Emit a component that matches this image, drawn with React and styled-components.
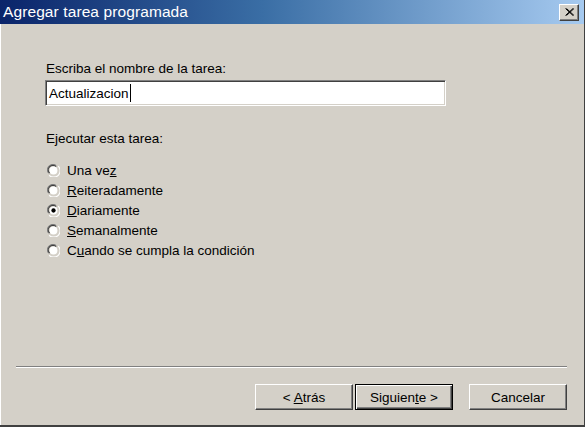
import React from "react"
import styled, { createGlobalStyle } from "styled-components"

const Global = createGlobalStyle`
  html, body {
    margin: 0;
    padding: 0;
    background: #d4d0c8;
  }
  body {
    font-family: "Liberation Sans", Arial, sans-serif;
    font-size: 13.5px;
    color: #000;
  }
`

const Window = styled.div`
  width: 585px;
  height: 427px;
  box-sizing: border-box;
  display: flex;
  flex-direction: column;
  background: #d4d0c8;
  border-right: 1px solid #404040;
  border-bottom: 2px solid #404040;
  box-shadow: inset 1px 0 0 #fff, inset 3px 0 0 #d4d0c8;
  overflow: hidden;
`

const TitleBar = styled.div`
  height: 24px;
  flex: none;
  display: flex;
  align-items: center;
  justify-content: space-between;
  padding: 0 5px 0 3px;
  background: linear-gradient(to right, #0a246a 0%, #3a6ea5 45%, #a6caf0 100%);
  color: #fff;
  font-size: 15.5px;
`

const Title = styled.span`
  letter-spacing: 0.1px;
`

const CloseButton = styled.div`
  width: 20px;
  height: 17px;
  box-sizing: border-box;
  display: flex;
  align-items: center;
  justify-content: center;
  background: #d4d0c8;
  border: 1px solid;
  border-color: #fff #404040 #404040 #fff;
  box-shadow: inset -1px -1px 0 #808080;
`

const Body = styled.div`
  flex: 1;
  display: flex;
  flex-direction: column;
  padding: 37px 0 0 46px;
`

const Label = styled.div`
  line-height: 15px;
`

const TextBox = styled.div`
  margin: 4px 0 0 -1px;
  width: 401px;
  height: 26px;
  box-sizing: border-box;
  display: flex;
  align-items: center;
  padding-left: 3px;
  background: #fff;
  border: 1px solid;
  border-color: #808080 #fff #fff #808080;
  box-shadow: inset 1px 1px 0 #404040, inset -1px -1px 0 #d4d0c8;
  font-size: 13.5px;
`

const Caret = styled.span`
  display: inline-block;
  width: 1px;
  height: 18px;
  background: #000;
  margin-left: 1px;
`

const GroupLabel = styled(Label)`
  margin-top: 25px;
`

const RadioList = styled.div`
  display: flex;
  flex-direction: column;
  margin-top: 14px;
`

const RadioRow = styled.div`
  display: flex;
  align-items: center;
  height: 20px;
  gap: 7px;
  padding-left: 1px;
`

const Footer = styled.div`
  flex: none;
  padding: 0 17px 0 16px;
`

const Separator = styled.div`
  height: 0;
  border-top: 1px solid #808080;
  border-bottom: 1px solid #fff;
`

const ButtonRow = styled.div`
  display: flex;
  justify-content: flex-end;
  padding: 16px 0 15px;
`

const Button = styled.div`
  width: 98px;
  height: 26px;
  box-sizing: border-box;
  display: flex;
  align-items: center;
  justify-content: center;
  background: #d4d0c8;
  margin-left: ${p => p.$gap || 0}px;
  border: 1px solid;
  border-color: ${p => (p.$default ? "#000" : "#fff #404040 #404040 #fff")};
  box-shadow: ${p =>
    p.$default
      ? "inset 1px 1px 0 #fff, inset -1px -1px 0 #404040, inset -2px -2px 0 #808080"
      : "inset -1px -1px 0 #808080"};
`

function Radio({ checked }) {
  return (
    <svg width="13" height="13" viewBox="0 0 12 12">
      <path d="M1.5 8.5 A5 5 0 0 1 8.5 1.5" fill="none" stroke="#808080" />
      <path d="M2.5 8.5 A4 4 0 0 1 8.5 2.5" fill="none" stroke="#404040" />
      <path d="M3.5 10.5 A5 5 0 0 0 10.5 3.5" fill="none" stroke="#d4d0c8" />
      <path d="M2 10.4 A5.5 5.5 0 0 0 10.4 2" fill="none" stroke="#fff" />
      <circle cx="6" cy="6" r="3.6" fill="#fff" />
      {checked && <circle cx="6" cy="6" r="2" fill="#000" />}
    </svg>
  )
}

const options = [
  ["Una ve", "z", ""],
  ["", "R", "eiteradamente"],
  ["", "D", "iariamente", true],
  ["", "S", "emanalmente"],
  ["C", "u", "ando se cumpla la condición"],
]

export default function App() {
  return (
    <>
      <Global />
      <Window>
        <TitleBar>
          <Title>Agregar tarea programada</Title>
          <CloseButton>
            <svg width="9" height="8" viewBox="0 0 9 8">
              <path d="M0.5 0.5 L8 7.5 M1.5 0.5 L9 7.5 M8 0.5 L0.5 7.5 M9 0.5 L1.5 7.5" stroke="#000" strokeWidth="1" />
            </svg>
          </CloseButton>
        </TitleBar>
        <Body>
          <Label>Escriba el nombre de la tarea:</Label>
          <TextBox>
            Actualizacion<Caret />
          </TextBox>
          <GroupLabel>Ejecutar esta tarea:</GroupLabel>
          <RadioList>
            {options.map(([a, u, b, checked], i) => (
              <RadioRow key={i}>
                <Radio checked={checked} />
                <span>
                  {a}
                  <u>{u}</u>
                  {b}
                </span>
              </RadioRow>
            ))}
          </RadioList>
        </Body>
        <Footer>
          <Separator />
          <ButtonRow>
            <Button>
              <span>
                &lt; <u>A</u>trás
              </span>
            </Button>
            <Button $default $gap={2}>
              <span>
                Siguien<u>t</u>e &gt;
              </span>
            </Button>
            <Button $gap={16}>Cancelar</Button>
          </ButtonRow>
        </Footer>
      </Window>
    </>
  )
}
